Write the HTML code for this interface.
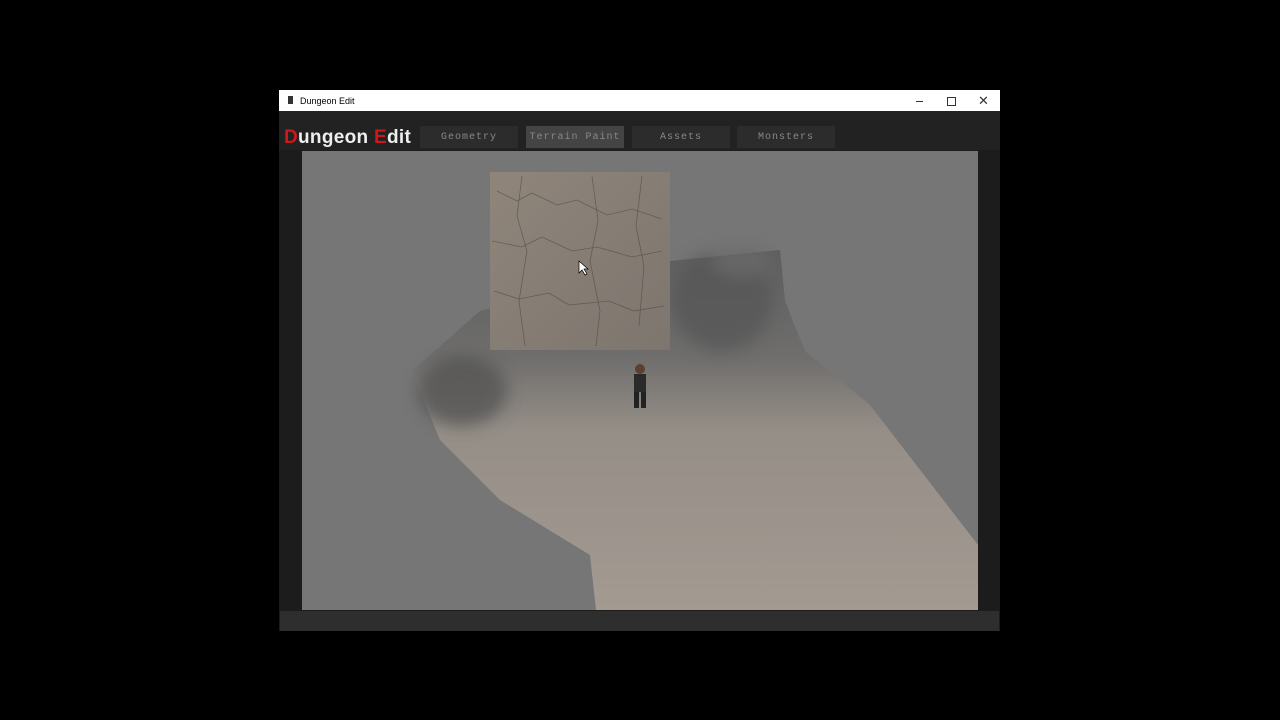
<!DOCTYPE html>
<html><head><style>
body{margin:0;width:1280px;height:720px;background:#000;position:relative;overflow:hidden;font-family:"Liberation Sans",sans-serif}
.win{position:absolute;left:279px;top:90px;width:721px;height:541px;background:#1c1c1c}
.title{position:absolute;left:0;top:0;width:721px;height:21px;background:#fff;font-size:9px;color:#000}
.tb{position:absolute;left:0;top:21px;width:721px;height:39px;background:#222}
.btn{position:absolute;top:15px;height:22px;width:98px;background:#2c2c2c;color:#888;font-family:"Liberation Mono",monospace;font-size:10px;text-align:center;line-height:23px;letter-spacing:1px}
.vp{position:absolute;left:23px;top:61px;width:676px;height:459px;background:#767676;overflow:hidden}
.bot{position:absolute;left:1px;top:521px;width:719px;height:20px;background:#2e2e2e}
</style></head><body>
<div class="win">
<div class="title"><span style="position:absolute;left:9px;top:6px;width:5px;height:8px;background:#333"></span><span style="position:absolute;left:21px;top:6px">Dungeon Edit</span>
<span style="position:absolute;left:637px;top:11px;width:7px;height:1px;background:#333"></span>
<span style="position:absolute;left:668px;top:7px;width:7px;height:7px;border:1px solid #333"></span>
<span style="position:absolute;left:699px;top:3px;font-size:13px;color:#333">✕</span></div>
<div class="tb">
<div style="position:absolute;left:5px;top:16px;font-size:19px;font-weight:bold;color:#eee;letter-spacing:0.3px"><span style="color:#d01818">D</span>ungeon <span style="color:#d01818">E</span>dit</div>
<div class="btn" style="left:141px">Geometry</div>
<div class="btn" style="left:247px;background:#444">Terrain Paint</div>
<div class="btn" style="left:353px">Assets</div>
<div class="btn" style="left:458px">Monsters</div>
</div>
<div class="vp">
<svg width="676" height="459">
<defs>
<linearGradient id="g" x1="0" y1="0" x2="0" y2="1"><stop offset="0" stop-color="#5e5e5e"/><stop offset="0.3" stop-color="#6f6e6d"/><stop offset="0.5" stop-color="#958e87"/><stop offset="1" stop-color="#a39a91"/></linearGradient>
<linearGradient id="c" x1="0" y1="0" x2="1" y2="1"><stop offset="0" stop-color="#8f857b"/><stop offset="1" stop-color="#7d766e"/></linearGradient>
<filter id="b"><feGaussianBlur stdDeviation="8"/></filter>
</defs>
<polygon points="110,220 178,160 368,110 478,99 483,150 503,200 568,254 676,394 676,459 294,459 288,404 198,349 138,289" fill="url(#g)"/>
<g filter="url(#b)" opacity="0.7">
<ellipse cx="160" cy="240" rx="45" ry="35" fill="#4f4f4f"/>
<ellipse cx="420" cy="150" rx="50" ry="50" fill="#555"/>
<ellipse cx="440" cy="110" rx="30" ry="15" fill="#6a6a6a"/>
</g>
<rect x="188" y="21" width="180" height="178" fill="url(#c)"/>
<g stroke="#4e463e" stroke-width="0.8" fill="none" opacity="0.6">
<path d="M195,40 l20,10 l15,-8 l25,12 l20,-5 l30,15 l25,-6 l30,10"/>
<path d="M190,90 l30,6 l20,-10 l30,14 l25,-4 l35,10 l30,-6"/>
<path d="M192,140 l25,8 l30,-6 l20,12 l40,-4 l25,10 l30,-5"/>
<path d="M220,25 l-5,40 l10,35 l-8,50 l6,45"/><path d="M290,25 l6,45 l-8,40 l10,50 l-4,35"/><path d="M340,25 l-6,50 l8,40 l-5,60"/>
</g>
<g transform="translate(338,218)"><circle cx="0" cy="0" r="5" fill="#5a4030"/><rect x="-6" y="5" width="12" height="18" fill="#2a2a2a"/><rect x="-6" y="23" width="5" height="16" fill="#222"/><rect x="1" y="23" width="5" height="16" fill="#222"/></g>
<path d="M277,110 l0,12 l3,-3 l3,5 l2,-1 l-3,-5 l4,0 z" fill="#fff" stroke="#000" stroke-width="0.7"/>
</svg>
</div>
<div class="bot"></div>
</div>
</body></html>
